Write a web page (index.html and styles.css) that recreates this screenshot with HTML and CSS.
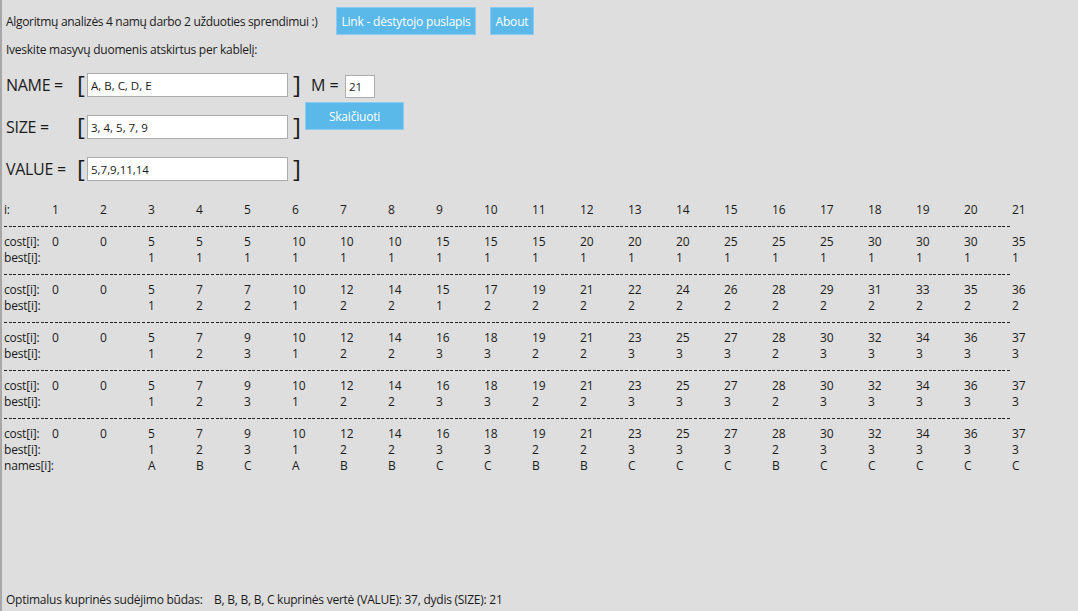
FILE: index.html
```html
<!DOCTYPE html>
<html lang="lt">
<head>
<meta charset="utf-8">
<title>Algoritmų analizė</title>
<link rel="stylesheet" href="styles.css">
</head>
<body>
<div class="app">
  <header class="top">
    <span class="title">Algoritmų analizės 4 namų darbo 2 užduoties sprendimui :)</span>
    <a class="btn btn-link">Link - dėstytojo puslapis</a>
    <a class="btn btn-about">About</a>
  </header>
  <p class="hint">Iveskite masyvų duomenis atskirtus per kablelį:</p>

  <div class="form">
    <div class="row">
      <span class="lbl">NAME =</span>
      <span class="br">[</span>
      <input class="field" value="A, B, C, D, E">
      <span class="br br-r">]</span>
      <span class="m-lbl">M =</span>
      <input class="field field-m" value="21">
    </div>
    <div class="row">
      <span class="lbl">SIZE =</span>
      <span class="br">[</span>
      <input class="field" value="3, 4, 5, 7, 9">
      <span class="br br-r">]</span>
      <a class="btn btn-calc">Skaičiuoti</a>
    </div>
    <div class="row">
      <span class="lbl">VALUE =</span>
      <span class="br">[</span>
      <input class="field" value="5,7,9,11,14">
      <span class="br br-r">]</span>
    </div>
  </div>

  <div class="table">
    <span>i:</span><span>1</span><span>2</span><span>3</span><span>4</span><span>5</span><span>6</span><span>7</span><span>8</span><span>9</span><span>10</span><span>11</span><span>12</span><span>13</span><span>14</span><span>15</span><span>16</span><span>17</span><span>18</span><span>19</span><span>20</span><span>21</span>
    <div class="dash"></div>

    <span>cost[i]:</span><span>0</span><span>0</span><span>5</span><span>5</span><span>5</span><span>10</span><span>10</span><span>10</span><span>15</span><span>15</span><span>15</span><span>20</span><span>20</span><span>20</span><span>25</span><span>25</span><span>25</span><span>30</span><span>30</span><span>30</span><span>35</span>
    <span>best[i]:</span><span></span><span></span><span>1</span><span>1</span><span>1</span><span>1</span><span>1</span><span>1</span><span>1</span><span>1</span><span>1</span><span>1</span><span>1</span><span>1</span><span>1</span><span>1</span><span>1</span><span>1</span><span>1</span><span>1</span><span>1</span>
    <div class="dash"></div>

    <span>cost[i]:</span><span>0</span><span>0</span><span>5</span><span>7</span><span>7</span><span>10</span><span>12</span><span>14</span><span>15</span><span>17</span><span>19</span><span>21</span><span>22</span><span>24</span><span>26</span><span>28</span><span>29</span><span>31</span><span>33</span><span>35</span><span>36</span>
    <span>best[i]:</span><span></span><span></span><span>1</span><span>2</span><span>2</span><span>1</span><span>2</span><span>2</span><span>1</span><span>2</span><span>2</span><span>2</span><span>2</span><span>2</span><span>2</span><span>2</span><span>2</span><span>2</span><span>2</span><span>2</span><span>2</span>
    <div class="dash"></div>

    <span>cost[i]:</span><span>0</span><span>0</span><span>5</span><span>7</span><span>9</span><span>10</span><span>12</span><span>14</span><span>16</span><span>18</span><span>19</span><span>21</span><span>23</span><span>25</span><span>27</span><span>28</span><span>30</span><span>32</span><span>34</span><span>36</span><span>37</span>
    <span>best[i]:</span><span></span><span></span><span>1</span><span>2</span><span>3</span><span>1</span><span>2</span><span>2</span><span>3</span><span>3</span><span>2</span><span>2</span><span>3</span><span>3</span><span>3</span><span>2</span><span>3</span><span>3</span><span>3</span><span>3</span><span>3</span>
    <div class="dash"></div>

    <span>cost[i]:</span><span>0</span><span>0</span><span>5</span><span>7</span><span>9</span><span>10</span><span>12</span><span>14</span><span>16</span><span>18</span><span>19</span><span>21</span><span>23</span><span>25</span><span>27</span><span>28</span><span>30</span><span>32</span><span>34</span><span>36</span><span>37</span>
    <span>best[i]:</span><span></span><span></span><span>1</span><span>2</span><span>3</span><span>1</span><span>2</span><span>2</span><span>3</span><span>3</span><span>2</span><span>2</span><span>3</span><span>3</span><span>3</span><span>2</span><span>3</span><span>3</span><span>3</span><span>3</span><span>3</span>
    <div class="dash"></div>

    <span>cost[i]:</span><span>0</span><span>0</span><span>5</span><span>7</span><span>9</span><span>10</span><span>12</span><span>14</span><span>16</span><span>18</span><span>19</span><span>21</span><span>23</span><span>25</span><span>27</span><span>28</span><span>30</span><span>32</span><span>34</span><span>36</span><span>37</span>
    <span>best[i]:</span><span></span><span></span><span>1</span><span>2</span><span>3</span><span>1</span><span>2</span><span>2</span><span>3</span><span>3</span><span>2</span><span>2</span><span>3</span><span>3</span><span>3</span><span>2</span><span>3</span><span>3</span><span>3</span><span>3</span><span>3</span>
    <span>names[i]:</span><span></span><span></span><span>A</span><span>B</span><span>C</span><span>A</span><span>B</span><span>B</span><span>C</span><span>C</span><span>B</span><span>B</span><span>C</span><span>C</span><span>C</span><span>B</span><span>C</span><span>C</span><span>C</span><span>C</span><span>C</span>
  </div>

  <footer class="result">
    <span class="res-lbl">Optimalus kuprinės sudėjimo būdas:</span>
    <span>B, B, B, B, C kuprinės vertė (VALUE): 37, dydis (SIZE): 21</span>
  </footer>
</div>
</body>
</html>
```

FILE: styles.css
```css
* { box-sizing: border-box; }
html, body {
  margin: 0;
  padding: 0;
  background: #dedede;
}
body {
  font-family: "Open Sans", "Noto Sans", sans-serif;
  font-size: 12px;
  color: #1b1b1b;
}
.app {
  height: 611px;
  display: flex;
  flex-direction: column;
  border-left: 2px solid #a8a8a8;
  padding-left: 4px;
  overflow: hidden;
}
.top {
  display: flex;
  align-items: center;
  height: 28px;
  margin-top: 7px;
}
.title {
  width: 330px;
  flex: none;
  letter-spacing: -0.32px;
}
.btn {
  display: inline-flex;
  align-items: center;
  justify-content: center;
  height: 28px;
  background: #5ab9e9;
  border: 1px solid #8ccbef;
  color: #ffffff;
  font-size: 12px;
  letter-spacing: -0.2px;
  cursor: pointer;
}
.btn-link { width: 140px; }
.btn-about { width: 44px; margin-left: 14px; }
.hint {
  margin: 7px 0 0;
  line-height: 16px;
  letter-spacing: -0.25px;
}
.form {
  display: flex;
  flex-direction: column;
  gap: 18px;
  margin-top: 15px;
}
.row {
  display: flex;
  align-items: center;
  height: 24px;
}
.lbl {
  width: 71px;
  font-size: 16px;
  letter-spacing: -0.3px;
}
.br {
  font-size: 24px;
  line-height: 24px;
  width: 10px;
  font-weight: 400;
  margin-top: -3px;
}
.br-r { margin-left: 5px; width: 12px; }
.field {
  width: 201px;
  height: 24px;
  border: 1px solid #acacac;
  background: #ffffff;
  font-family: "Open Sans", "Noto Sans", sans-serif;
  font-size: 11.5px;
  color: #1b1b1b;
  padding: 0 3px;
  margin: 0;
  outline: none;
}
.m-lbl {
  font-size: 16px;
  margin-left: 6px;
  width: 34px;
}
.field-m {
  width: 30px;
  height: 23px;
  margin-top: 2px;
}
.btn-calc {
  width: 99px;
  height: 28px;
  margin-left: 0;
  margin-top: -22px;
}
.table {
  display: grid;
  grid-template-columns: repeat(22, 48px);
  grid-auto-rows: 16px;
  line-height: 16px;
  margin-top: 21px;
  margin-left: -2px;
  letter-spacing: -0.2px;
}
.table span { white-space: nowrap; }
.dash {
  grid-column: 1 / -1;
  width: 1006px;
  height: 1px;
  align-self: center;
  background: repeating-linear-gradient(90deg, #222 0 3px, transparent 3px 4.6px);
}
.result {
  margin-top: auto;
  line-height: 16px;
  padding-bottom: 3px;
  display: flex;
  letter-spacing: -0.25px;
}
.res-lbl { width: 208px; }
```
